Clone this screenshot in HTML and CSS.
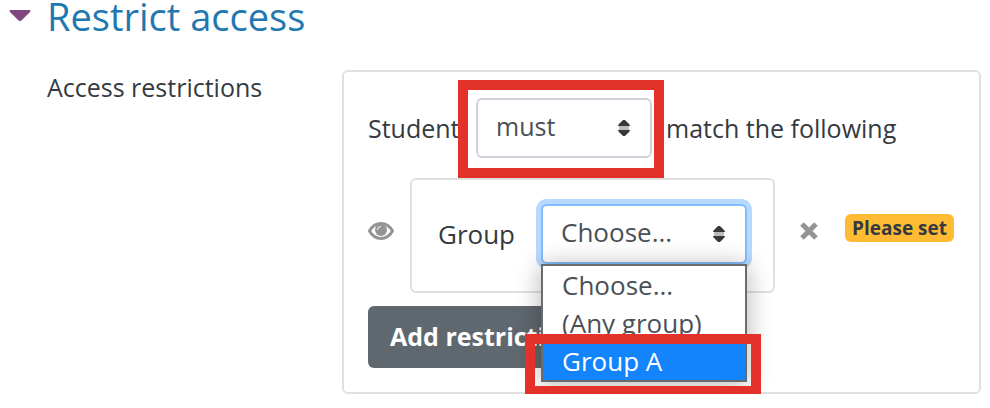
FILE: index.html
```html
<!DOCTYPE html>
<html lang="en">
<head>
  <meta charset="utf-8">
  <title>Restrict access</title>
  <meta name="viewport" content="width=device-width, initial-scale=1">
  <link rel="stylesheet" href="styles.css">
</head>
<body>
  <h2 class="section-title">
    <a href="#restrict">
      <svg class="caret" viewBox="0 0 22 12" aria-hidden="true"><path d="M1 0h20q1 1 0 2l-8 8q-2 2-4 0L1 2Q0 1 1 0z"/></svg>
      Restrict access
    </a>
  </h2>

  <div class="form-row" id="restrict">
    <div class="form-label">Access restrictions</div>

    <div class="restrictions">
      <div class="match-row">
        <label for="match">Student</label>
        <div class="select-wrap match-select highlight">
          <select class="custom-select" id="match">
            <option>must</option>
            <option>must not</option>
          </select>
        </div>
        <span>match the following</span>
      </div>

      <div class="item-row">
        <button class="icon-btn eye" type="button" aria-label="Hide">
          <svg viewBox="0 0 26 18"><path class="lid" d="M1.500 9C4 4.500 8 1.500 13 1.500S22 4.500 24.500 9C22 13.500 18 16.500 13 16.500S4 13.500 1.500 9z"/><circle cx="13" cy="8" r="6"/><path class="glint" d="M9.500 8A3.500 3.500 0 0 1 13 4.500"/></svg>
        </button>
        <div class="item">
          <label for="group">Group</label>
          <div class="select-wrap group-select">
            <select class="custom-select focused" id="group">
              <option>Choose...</option>
              <option>(Any group)</option>
              <option>Group A</option>
            </select>
            <ul class="menu">
              <li>Choose...</li>
              <li>(Any group)</li>
              <li class="active highlight">Group A</li>
            </ul>
          </div>
        </div>
        <button class="icon-btn remove" type="button" aria-label="Delete">
          <svg viewBox="0 0 20 18"><path d="M3 2l14 14M17 2L3 16"/></svg>
        </button>
        <span class="badge">Please set</span>
      </div>

      <button class="btn" type="button">Add restriction...</button>
    </div>
  </div>
</body>
</html>
```

FILE: styles.css
```css
* { box-sizing: border-box; }
body { margin: 0; padding: 0 9px; background: #fff; color: #343a40; font-family: "Open Sans", "Noto Sans", sans-serif; font-size: 25px; line-height: 36px; }
.section-title { margin: 0 0 38px; font-size: 38px; font-weight: 400; line-height: 32px; }
.section-title a { display: flex; align-items: center; gap: 16px; color: #1f78b0; text-decoration: none; }
.caret { width: 22px; height: 12px; fill: #804a80; }

.form-row { display: flex; padding-left: 38px; }
.form-label { flex: 0 0 295px; line-height: 34px; }
.restrictions { flex: 1; padding: 26px 24px 24px; border: 2px solid #e0e0e0; border-radius: 6px; }

.match-row { display: flex; align-items: center; gap: 14px; margin-bottom: 20px; }
.match-row label { width: 94px; white-space: nowrap; }
.select-wrap { position: relative; }
.match-select { width: 176px; }
.group-select { width: 206px; }
.custom-select {
  display: block; width: 100%; height: 60px; padding: 0 40px 4px 18px;
  border: 2px solid #ced4da; border-radius: 6px;
  color: #495057; font: inherit; appearance: none;
  background: #fff url("data:image/svg+xml,%3Csvg xmlns='http://www.w3.org/2000/svg' viewBox='0 0 12 16'%3E%3Cpath fill='%23bbb' d='M1 6h10v4H1z'/%3E%3Cpath fill='%23343a40' d='M5 0h2l4 4q1 1 1 2H0q0-1 1-2zM5 16h2l4-4q1-1 1-2H0q0 1 1 2z'/%3E%3C/svg%3E") no-repeat right 20px center / 12px 16px;
}
.custom-select.focused { border-color: #80bdff; box-shadow: 0 0 0 5px #b8d9ff; outline: none; }

.highlight::after { content: ""; position: absolute; z-index: 3; border: 10px solid #e23229; pointer-events: none; }
.match-select::after { inset: -18px -12px -20px -18px; }

.item-row { display: flex; align-items: flex-start; margin-bottom: 13px; }
.item { display: flex; align-items: center; gap: 26px; height: 115px; padding: 0 26px 4px; border: 2px solid #e0e0e0; border-radius: 6px; font-size: 26px; }
.icon-btn { padding: 0; border: 0; background: none; }
.icon-btn svg { display: block; }
.eye { margin: 44px 16px 0 0; }
.eye svg { width: 26px; height: 18px; fill: #949494; }
.eye .lid { fill: none; stroke: #949494; stroke-width: 3; }
.eye .glint { fill: none; stroke: #fff; stroke-width: 1; }
.remove { margin: 44px 26px 0 24px; }
.remove svg { width: 20px; height: 18px; fill: none; stroke: #949494; stroke-width: 5; }
.badge { margin-top: 36px; padding: 0 7px; border-radius: 6px; background: #ffbb33; color: #343a40; font-size: 19px; font-weight: 700; line-height: 28px; }

.menu {
  position: absolute; z-index: 2; top: 60px; left: 0; width: 100%; margin: 0; padding: 0;
  border: 2px solid #6b6b6b; background: #fff; color: #495057; list-style: none;
  box-shadow: 0 2px 24px rgba(0,0,0,0.3);
}
.menu li { position: relative; padding-left: 19px; line-height: 38px; }
.menu .active { background: #1484fc; color: #fff; }
.menu .active::after { inset: -8px -16px -16px -18px; }

.btn { display: block; height: 62px; padding: 0 22px 2px; border: 0; border-radius: 6px; background: #60686f; color: #fff; font: inherit; font-weight: 700; }
```
